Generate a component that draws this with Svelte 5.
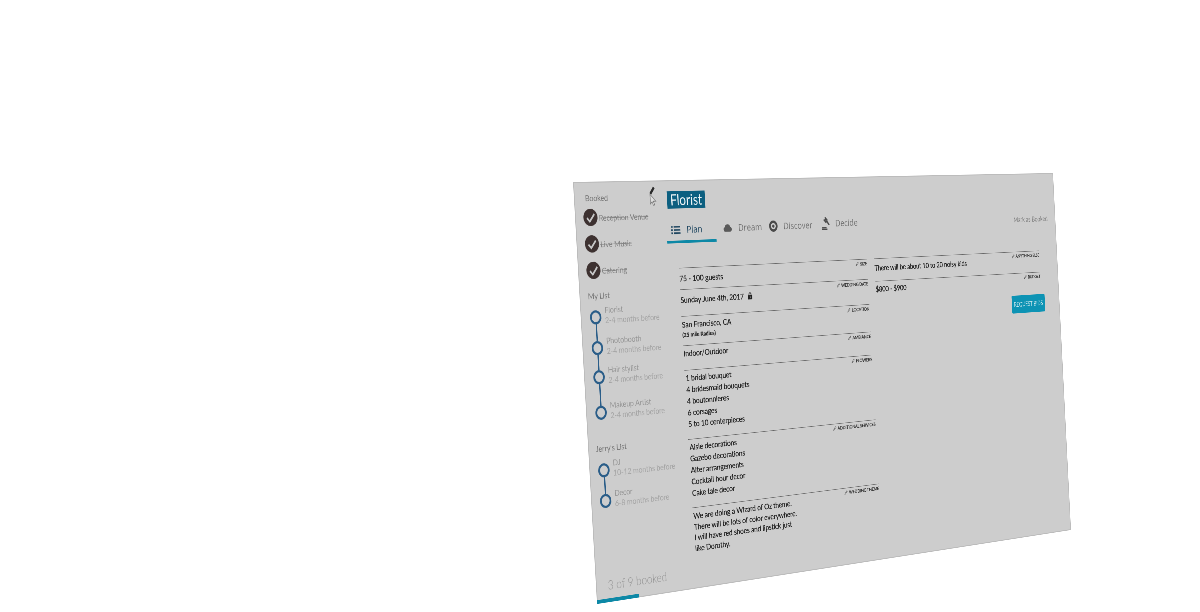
<script>
    // design size of the flat page, and the four screen corners it lands on
    const W = 1280;
    const H = 780;
    const quad = [[573, 182], [1053, 173], [1071, 530], [597, 604]];

    function toMatrix([[x0, y0], [x1, y1], [x2, y2], [x3, y3]]) {
        const dx1 = x1 - x2, dx2 = x3 - x2, sx = x0 - x1 + x2 - x3;
        const dy1 = y1 - y2, dy2 = y3 - y2, sy = y0 - y1 + y2 - y3;
        const det = dx1 * dy2 - dx2 * dy1;
        const g = (sx * dy2 - dx2 * sy) / det;
        const h = (dx1 * sy - sx * dy1) / det;
        const a = x1 - x0 + g * x1, b = x3 - x0 + h * x3;
        const d = y1 - y0 + g * y1, e = y3 - y0 + h * y3;
        return [a / W, d / W, 0, g / W, b / H, e / H, 0, h / H, 0, 0, 1, 0, x0, y0, 0, 1].join(',');
    }

    const matrix = toMatrix(quad);

    const booked = ['Reception Venue', 'Live Music', 'Catering'];
    const myList = [
        { name: 'Florist', when: '2-4 months before', h: 57 },
        { name: 'Photobooth', when: '2-4 months before', h: 54 },
        { name: 'Hair stylist', when: '2-4 months before', h: 66 },
        { name: 'Makeup Artist', when: '2-4 months before', h: 26 }
    ];
    const jerrysList = [
        { name: 'DJ', when: '10-12 months before', h: 57 },
        { name: 'Decor', when: '6-8 months before', h: 26 }
    ];

    // h: row height, off: first text line's centre below the rule, lh: line height
    const left = [
        { label: 'SIZE', h: 41, off: 20, lh: 22, lines: ['75 - 100 guests'] },
        { label: 'WEDDING DATE', h: 51, off: 20, lh: 22, lines: ['Sunday June 4th, 2017'], lock: true },
        { label: 'LOCATION', h: 56, off: 16, lh: 22, lines: ['San Francisco, CA'], note: '(25 mile Radius)' },
        { label: 'AMBIANCE', h: 47, off: 15, lh: 22, lines: ['Indoor/Outdoor'] },
        { label: 'FLOWERS', h: 132, off: 15, lh: 22, inset: true, lines: ['1 bridal bouquet', '4 bridesmaid bouquets', '4 boutonnieres', '6 corsages', '5 to 10 centerpieces'] },
        { label: 'ADDITIONAL SERVICES', h: 131, off: 15, lh: 22, inset: true, lines: ['Aisle decorations', 'Gazebo decorations', 'Alter arrangements', 'Cocktail hour decor', 'Cake tale decor'] },
        { label: 'WEDDING THEME', h: 100, off: 17, lh: 20.5, inset: true, lines: ['We are doing a Wizard of Oz theme.', 'There will be lots of color everywhere.', 'I will have red shoes and lipstick just', 'like Dorothy.'] }
    ];
    const right = [
        { label: 'ANYTHING ELSE', h: 46, off: 19.5, lh: 22, lines: ['There will be about 10 to 20 noisy kids'] },
        { label: 'BUDGET', h: 48, off: 16.5, lh: 22, lines: ['$800 - $900'] }
    ];
</script>

{#snippet field(f)}
    <div class="field" style="height: {f.h}px">
        <div class="field-label">
            <svg viewBox="0 0 10 10" width="9" height="9"><path d="M1 9 L2 6.5 L7.5 1 L9 2.5 L3.5 8 Z" fill="none" stroke="#555" stroke-width="1" /></svg>
            {f.label}
        </div>
        <div class="field-body" class:inset={f.inset} style="margin-top: {f.off - 14.5 - f.lh / 2}px; line-height: {f.lh}px">
            {#each f.lines as line}
                <div>
                    {line}
                    {#if f.lock}
                        <svg class="lock" viewBox="0 0 14 18" width="12" height="16"><path d="M4 8 V5 a3 3 0 0 1 6 0 V8" fill="none" stroke="#222" stroke-width="2" /><rect x="1" y="7" width="12" height="10" rx="1" fill="#222" /><rect x="6" y="10" width="2" height="4" fill="#ccc" /></svg>
                    {/if}
                </div>
            {/each}
            {#if f.note}
                <div class="field-note">{f.note}</div>
            {/if}
        </div>
    </div>
{/snippet}

{#snippet timeline(items)}
    <div class="timeline">
        {#each items as item}
            <div class="step" style="height: {item.h}px">
                <div class="node">
                    <span class="ring"></span>
                    <span class="stem"></span>
                </div>
                <div class="step-text">
                    <div>{item.name}</div>
                    <div class="when">{item.when}</div>
                </div>
            </div>
        {/each}
    </div>
{/snippet}

<div class="stage">
    <div class="panel" style="transform: matrix3d({matrix})">
        <aside class="side">
            <div class="side-head first">Booked</div>
            <div class="booked">
                {#each booked as b}
                    <div class="booked-row">
                        <svg viewBox="0 0 32 32" width="32" height="32">
                            <circle cx="16" cy="16" r="16" fill="#3d3130" />
                            <path d="M8 17 L14 23.5 L25 10" fill="none" stroke="#c6c6c6" stroke-width="3.6" />
                        </svg>
                        <s>{b}</s>
                    </div>
                {/each}
            </div>
            <div class="side-head mine">My List</div>
            {@render timeline(myList)}
            <div class="side-head jerry">Jerry's List</div>
            {@render timeline(jerrysList)}
            <div class="count">3 of 9 booked</div>
            <div class="progress"></div>
        </aside>

        <main class="main">
            <div class="title"><span>Florist</span></div>
            <div class="tabbar">
                <nav class="tabs">
                    <div class="tab active">
                        <svg viewBox="0 0 18 14" width="22" height="17"><path d="M0 1h3v2.4H0zM5 1h13v2.4H5zM0 6h3v2.4H0zM5 6h13v2.4H5zM0 11h3v2.4H0zM5 11h13v2.4H5z" fill="#1f4660" /></svg>
                        Plan
                    </div>
                    <div class="tab">
                        <svg viewBox="0 0 20 14" width="22" height="16"><path d="M4.5 14 a4 4 0 0 1 -1 -7.8 a6.5 6.5 0 0 1 12.6 -0.6 a4.3 4.3 0 0 1 -0.4 8.4 Z" fill="#5a5a5a" /></svg>
                        Dream
                    </div>
                    <div class="tab">
                        <svg viewBox="0 0 18 18" width="22" height="22"><circle cx="9" cy="9" r="7" fill="none" stroke="#4a4a4a" stroke-width="3.8" /><circle cx="9" cy="9" r="2.4" fill="#4a4a4a" /></svg>
                        Discover
                    </div>
                    <div class="tab decide">
                        <svg viewBox="0 0 20 24" width="22" height="26"><path d="M9 1 L15 7 M6 5 L12 11" stroke="#4a4a4a" stroke-width="3" fill="none" /><path d="M11 4 L8 8 M12 7 L19 15" stroke="#4a4a4a" stroke-width="3" fill="none" /><path d="M1 20 H12 M0 23 H14" stroke="#4a4a4a" stroke-width="2.4" fill="none" /></svg>
                        Decide
                    </div>
                </nav>
                <div class="mark">Mark as Booked</div>
            </div>

            <div class="columns">
                <div class="col">
                    {#each left as f}
                        {@render field(f)}
                    {/each}
                </div>
                <div class="col">
                    {#each right as f}
                        {@render field(f)}
                    {/each}
                    <div class="actions">
                        <div class="bids">REQUEST BIDS</div>
                    </div>
                </div>
            </div>
        </main>

        <!-- pencil and mouse pointer sit on top of the page -->
        <svg class="pointer" viewBox="0 0 30 40" width="30" height="40">
            <path d="M21 3 L12 15" stroke="#2b2b2b" stroke-width="5" fill="none" />
            <path d="M11 16 L11 34 L15 30 L18 37 L21 36 L18 29 L24 29 Z" fill="#dedede" stroke="#777" stroke-width="1.4" />
        </svg>
    </div>
</div>

<style>
    :global(body) {
        background: #fff;
    }

    .stage {
        position: relative;
        height: 612px;
        overflow: hidden;
        background: #fff;
    }

    .panel {
        position: absolute;
        left: 0;
        top: 0;
        width: 1280px;
        height: 780px;
        display: flex;
        background: #cdcdcd;
        box-shadow: inset 0 0 0 2px #bcbcbc;
        transform-origin: 0 0;
        font-family: Lato, sans-serif;
        font-size: 16px;
        letter-spacing: -0.2px;
        color: #333;
        filter: blur(0.35px);
    }

    .side {
        width: 211px;
        flex: none;
        display: flex;
        flex-direction: column;
        padding: 21px 0 0 19px;
        box-sizing: border-box;
        color: #969696;
    }

    .side-head {
        line-height: 18px;
        color: #747474;
    }

    .first {
        padding-left: 6px;
    }

    .mine {
        margin-top: 22px;
    }

    .jerry {
        margin-top: 44px;
        margin-left: -2px;
    }

    .booked {
        display: flex;
        flex-direction: column;
        gap: 17px;
        margin-top: 11px;
    }

    .booked-row {
        display: flex;
        align-items: center;
        gap: 3px;
        height: 32px;
        white-space: nowrap;
    }

    .booked-row svg {
        flex: none;
    }

    .booked-row s {
        color: #828282;
    }

    .timeline {
        display: flex;
        flex-direction: column;
        margin-top: 18px;
        margin-left: 2px;
    }

    .jerry + .timeline {
        margin-top: 19px;
        margin-left: 1px;
    }

    .step {
        display: flex;
        gap: 8px;
    }

    .node {
        width: 26px;
        flex: none;
        display: flex;
        flex-direction: column;
        align-items: center;
    }

    .ring {
        width: 26px;
        height: 26px;
        box-sizing: border-box;
        border: 4px solid #2a5d88;
        border-radius: 50%;
        flex: none;
    }

    .stem {
        width: 3px;
        flex: 1;
        background: #2a5d88;
    }

    .step-text {
        margin-top: -9px;
        line-height: 18px;
        white-space: nowrap;
    }

    .when {
        line-height: 20px;
        color: #a4a4a4;
    }

    .count {
        margin-top: auto;
        margin-left: 8px;
        margin-bottom: 12px;
        font-size: 23px;
        font-weight: 300;
        line-height: 26px;
        letter-spacing: 0;
        color: #929292;
    }

    .progress {
        width: 98px;
        height: 7px;
        margin-left: -19px;
        background: #0d88a6;
        flex: none;
    }

    .main {
        flex: 1;
        min-width: 0;
        padding: 21px 24px 0 0;
        display: flex;
        flex-direction: column;
    }

    .title span {
        display: inline-block;
        margin-left: 5px;
        width: 92px;
        height: 33px;
        line-height: 33px;
        text-align: center;
        font-size: 28px;
        letter-spacing: 0;
        color: #eef4f6;
        background: #0c5f80;
    }

    .tabbar {
        display: flex;
        justify-content: space-between;
        align-items: flex-end;
        height: 63px;
    }

    .tabs {
        display: flex;
        align-items: flex-start;
        font-family: "Open Sans", sans-serif;
        font-size: 19px;
        letter-spacing: 0;
        color: #737373;
    }

    .tab {
        display: flex;
        align-items: center;
        gap: 11px;
        height: 38px;
        padding: 0 0 8px 18px;
        box-sizing: border-box;
    }

    .tab svg {
        flex: none;
        margin-right: 4px;
    }

    .decide {
        margin-left: 6px;
        margin-top: -2px;
    }

    .active {
        padding: 0 34px 6px 11px;
        height: 41px;
        margin-bottom: -3px;
        color: #1f4660;
        border-bottom: 5px solid #0d88a6;
    }

    .mark {
        font-size: 15px;
        line-height: 18px;
        letter-spacing: 0;
        color: #808080;
        margin-bottom: 10px;
    }

    .columns {
        display: flex;
        gap: 20px;
        margin-top: 50px;
        margin-left: 24px;
        margin-right: 32px;
    }

    .col {
        flex: 1;
        min-width: 0;
    }

    .field {
        border-top: 1.5px solid #666;
        box-sizing: border-box;
    }

    .field-label {
        display: flex;
        justify-content: flex-end;
        align-items: center;
        gap: 3px;
        height: 10px;
        margin-top: 3px;
        font-size: 10px;
        font-weight: 700;
        letter-spacing: -0.3px;
        color: #333;
        white-space: nowrap;
    }

    .field-body {
        color: #222;
        white-space: nowrap;
        text-shadow: 0 0 0.6px #222;
    }

    .inset {
        padding-left: 2px;
    }

    .field-note {
        font-size: 12px;
        font-weight: 700;
        line-height: 17px;
        color: #2b2b2b;
    }

    .lock {
        vertical-align: -2px;
        margin-left: 6px;
    }

    .actions {
        display: flex;
        justify-content: flex-end;
        margin-right: -10px;
    }

    .bids {
        width: 102px;
        height: 38px;
        line-height: 38px;
        text-align: center;
        font-size: 13px;
        letter-spacing: 0;
        color: #cfe8ee;
        background: #0d93b4;
        border-radius: 3px;
    }

    .pointer {
        position: absolute;
        left: 165px;
        top: 10px;
    }
</style>
